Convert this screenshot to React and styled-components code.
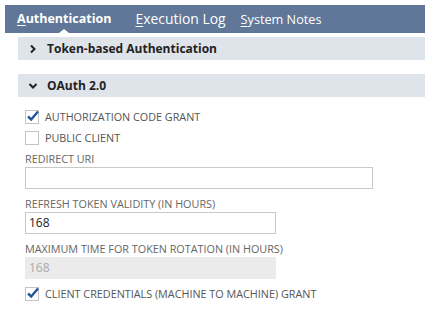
import React from 'react';
import styled, { createGlobalStyle } from 'styled-components';

const GlobalStyle = createGlobalStyle`
  body {
    margin: 0;
    background: #fff;
    font-family: "Open Sans", "Liberation Sans", sans-serif;
  }
`;

const Page = styled.div`
  padding: 5px 0 0 5px;
`;

const TabBar = styled.div`
  display: flex;
  align-items: center;
  gap: 15px;
  height: 28px;
  background: #607799;
  padding-left: 12px;
`;

const Tab = styled.div`
  position: relative;
  color: #fff;
  font-size: ${p => p.size}px;
  font-weight: ${p => (p.active ? 700 : 400)};
  line-height: 28px;
  margin-right: ${p => (p.active ? 9 : 0)}px;
  u { text-decoration: underline; text-underline-offset: 2px; }
  ${p => p.active && `
    &::after {
      content: '';
      position: absolute;
      left: 50%;
      bottom: 0;
      margin-left: -5px;
      border-left: 5px solid transparent;
      border-right: 5px solid transparent;
      border-bottom: 4px solid #fff;
    }
  `}
`;

const Body = styled.div`
  padding-left: 13px;
`;

const SectionHead = styled.div`
  display: flex;
  align-items: center;
  gap: 9px;
  height: 23px;
  margin-top: ${p => p.top}px;
  background: #dfe3ea;
  padding-left: 10px;
  color: #222;
  font-size: 12px;
  font-weight: 700;
`;

const Fields = styled.div`
  padding: 9px 0 0 7px;
  display: flex;
  flex-direction: column;
`;

const CheckRow = styled.label`
  display: flex;
  align-items: center;
  gap: 6px;
  height: 21px;
  margin-top: ${p => p.top || 0}px;
  color: #555;
  font-size: 10.8px;
`;

const Box = styled.span`
  width: 12px;
  height: 12px;
  border: 1px solid #c4c4c4;
  background: #fff;
  position: relative;
  flex: none;
  svg { position: absolute; left: 1px; top: -1px; }
`;

const Label = styled.div`
  color: #666;
  font-size: 10.8px;
  margin-top: ${p => p.top}px;
  line-height: 14px;
`;

const Input = styled.div`
  box-sizing: border-box;
  width: ${p => p.w}px;
  height: 22px;
  margin-top: 1px;
  border: 1px solid ${p => (p.disabled ? '#ebebeb' : '#c8c8c8')};
  background: ${p => (p.disabled ? '#ebebeb' : '#fff')};
  color: ${p => (p.disabled ? '#aaa' : '#222')};
  font-size: 12px;
  line-height: 20px;
  padding-left: 3px;
`;

const Chevron = ({ down }) => (
  <svg width="10" height="10" viewBox="0 0 10 10">
    <path
      d={down ? 'M1.5 3 L5 6.5 L8.5 3' : 'M3 1.5 L6.5 5 L3 8.5'}
      fill="none"
      stroke="#222"
      strokeWidth="2"
    />
  </svg>
);

const Check = ({ on }) => (
  <Box>
    {on && (
      <svg width="12" height="12" viewBox="0 0 12 12">
        <path d="M1 6.5 L4.2 9.5 L11 1.5" fill="none" stroke="#24569b" strokeWidth="2.4" />
      </svg>
    )}
  </Box>
);

export default function App() {
  return (
    <Page>
      <GlobalStyle />
      <TabBar>
        <Tab active size={12.5}><u>A</u>uthentication</Tab>
        <Tab size={13.9}><u>E</u>xecution Log</Tab>
        <Tab size={12.7}><u>S</u>ystem Notes</Tab>
      </TabBar>
      <Body>
        <SectionHead top={4}><Chevron />Token-based Authentication</SectionHead>
        <SectionHead top={14}><Chevron down />OAuth 2.0</SectionHead>
        <Fields>
          <CheckRow><Check on />AUTHORIZATION CODE GRANT</CheckRow>
          <CheckRow><Check />PUBLIC CLIENT</CheckRow>
          <Label top={4}>REDIRECT URI</Label>
          <Input w={348} />
          <Label top={8}>REFRESH TOKEN VALIDITY (IN HOURS)</Label>
          <Input w={251}>168</Input>
          <Label top={8}>MAXIMUM TIME FOR TOKEN ROTATION (IN HOURS)</Label>
          <Input w={251} disabled>168</Input>
          <CheckRow top={4}><Check on />CLIENT CREDENTIALS (MACHINE TO MACHINE) GRANT</CheckRow>
        </Fields>
      </Body>
    </Page>
  );
}
